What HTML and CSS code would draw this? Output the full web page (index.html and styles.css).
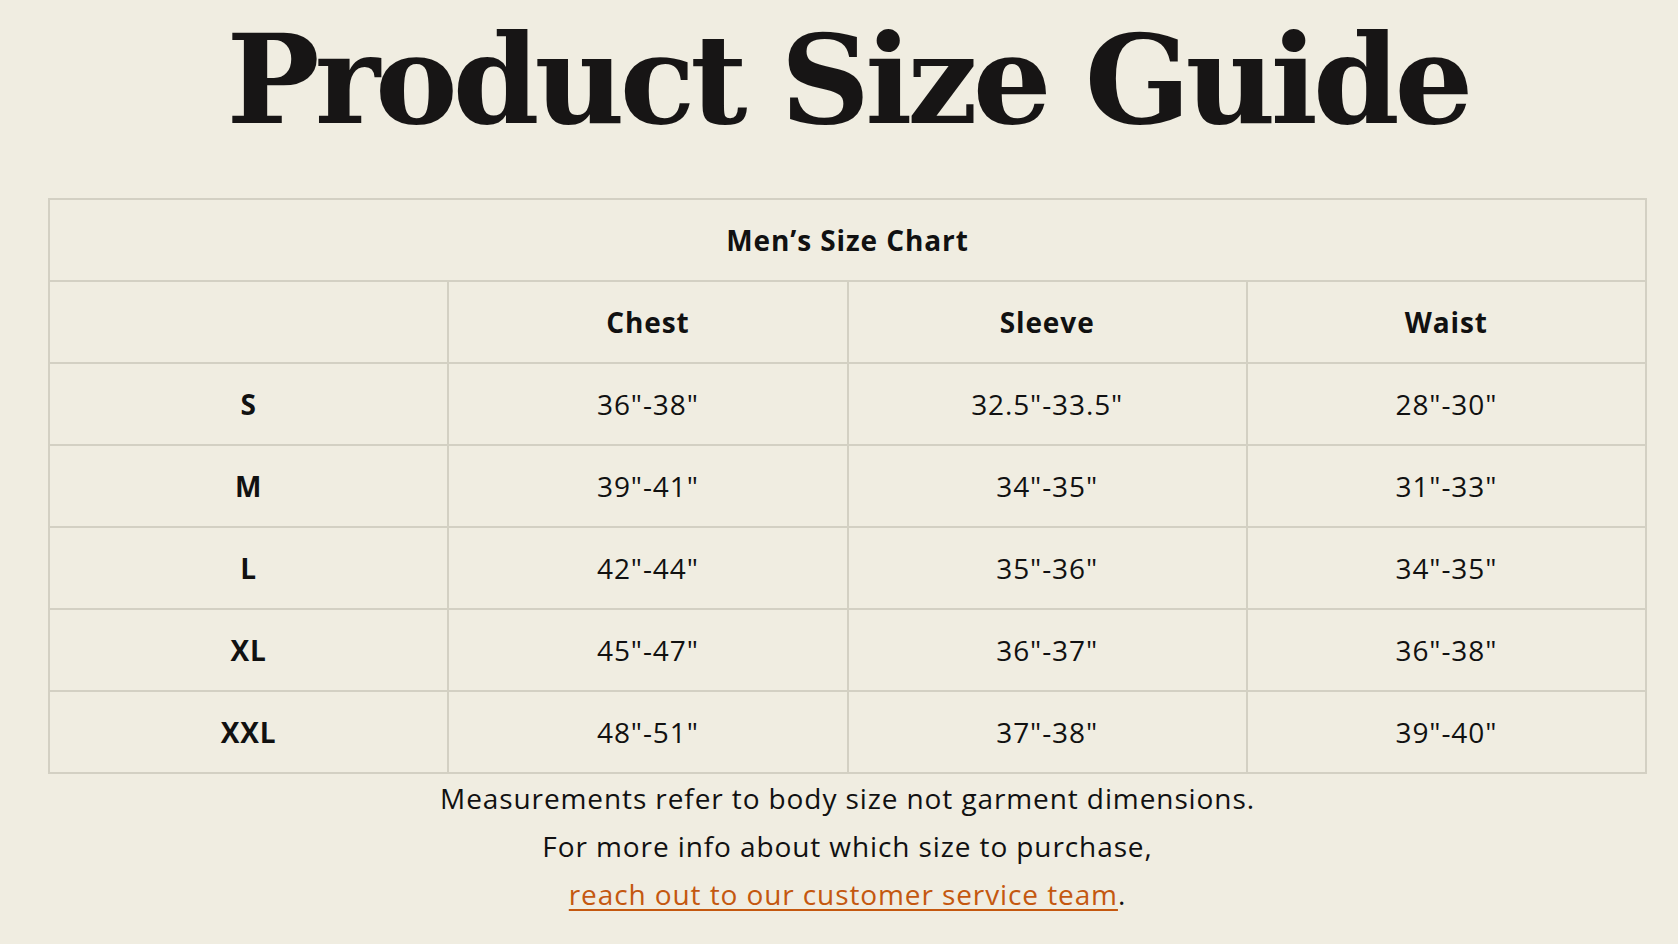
FILE: index.html
```html
<!DOCTYPE html>
<html>
<head>
<meta charset="utf-8">
<link rel="stylesheet" href="styles.css">
</head>
<body>
<main class="page">
  <h1 class="title">Product Size Guide</h1>
  <table class="chart">
    <thead>
      <tr><th colspan="4" class="caption">Men’s Size Chart</th></tr>
      <tr><th></th><th>Chest</th><th>Sleeve</th><th>Waist</th></tr>
    </thead>
    <tbody>
      <tr><th>S</th><td>36"-38"</td><td>32.5"-33.5"</td><td>28"-30"</td></tr>
      <tr><th>M</th><td>39"-41"</td><td>34"-35"</td><td>31"-33"</td></tr>
      <tr><th>L</th><td>42"-44"</td><td>35"-36"</td><td>34"-35"</td></tr>
      <tr><th>XL</th><td>45"-47"</td><td>36"-37"</td><td>36"-38"</td></tr>
      <tr><th>XXL</th><td>48"-51"</td><td>37"-38"</td><td>39"-40"</td></tr>
    </tbody>
  </table>
  <div class="notes">
    <p>Measurements refer to body size not garment dimensions.</p>
    <p>For more info about which size to purchase,</p>
    <p><a href="#" class="link">reach out to our customer service team</a>.</p>
  </div>
</main>
</body>
</html>
```

FILE: styles.css
```css
html, body {
  margin: 0;
  padding: 0;
  background: #f0ede1;
}
body {
  font-family: "Open Sans", Lato, sans-serif;
  color: #111;
}
.page {
  padding: 0 31px 0 48px;
}
.title {
  margin: 0;
  height: 198px;
  font-family: "DejaVu Serif", serif;
  font-weight: 900;
  font-size: 124px;
  line-height: 160px;
  text-align: center;
  color: #171515;
  letter-spacing: -5px;
}
.chart {
  width: 1599px;
  border-collapse: collapse;
  table-layout: fixed;
  font-size: 28px;
  letter-spacing: 0.9px;
}
.chart th, .chart td {
  border: 2px solid #d3d0c3;
  height: 80px;
  padding: 0;
  text-align: center;
  vertical-align: middle;
}
.chart th {
  font-weight: 700;
}
.chart td {
  font-weight: 400;
}
.notes {
  text-align: center;
  font-size: 28px;
  line-height: 48px;
  letter-spacing: 0.9px;
}
.notes p {
  margin: 0;
}
.link {
  color: #c4580f;
  text-decoration: underline;
  text-decoration-thickness: 2px;
  text-underline-offset: 4px;
}
```
